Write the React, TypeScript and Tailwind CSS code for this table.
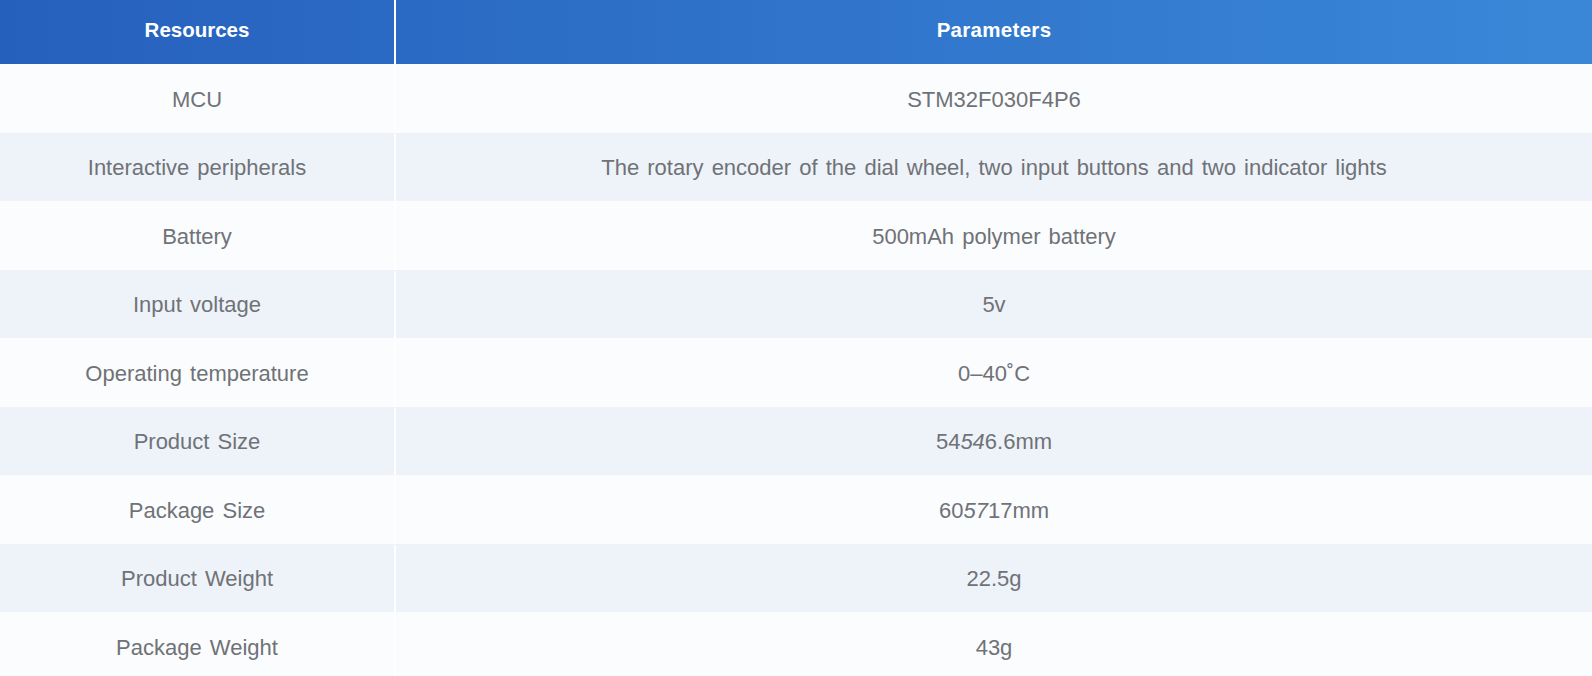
const rows: [string, React.ReactNode][] = [
  ["MCU", "STM32F030F4P6"],
  [
    "Interactive peripherals",
    "The rotary encoder of the dial wheel, two input buttons and two indicator lights",
  ],
  ["Battery", "500mAh polymer battery"],
  ["Input voltage", "5v"],
  ["Operating temperature", "0–40˚C"],
  [
    "Product Size",
    <>
      54<i>54</i>6.6mm
    </>,
  ],
  [
    "Package Size",
    <>
      60<i>57</i>17mm
    </>,
  ],
  ["Product Weight", "22.5g"],
  ["Package Weight", "43g"],
];

export default function App() {
  return (
    <div className="w-[1592px] h-[676px] overflow-hidden bg-white font-['Liberation_Sans',Arial,sans-serif]">
      <div className="flex h-[64px] bg-gradient-to-r from-[#2660bd] to-[#3a87d8] text-white font-bold text-[20.5px]">
        <div className="w-[394px] flex items-center justify-center pb-[3px]">
          Resources
        </div>
        <div className="w-[2px] bg-white" />
        <div className="flex-1 flex items-center justify-center pb-[3px] tracking-[0.3px]">
          Parameters
        </div>
      </div>
      {rows.map(([name, value], i) => (
        <div
          key={name}
          className={`flex h-[68.5px] pt-[1.5px] text-[22px] [word-spacing:2px] text-[#6f7277] ${
            i % 2 === 0 ? "bg-[#fbfcfe]" : "bg-[#eef3f9]"
          }`}
        >
          <div className="w-[394px] flex items-center justify-center">
            {name}
          </div>
          <div className="w-[2px] bg-white" />
          <div className="flex-1 flex items-center justify-center">{value}</div>
        </div>
      ))}
    </div>
  );
}
